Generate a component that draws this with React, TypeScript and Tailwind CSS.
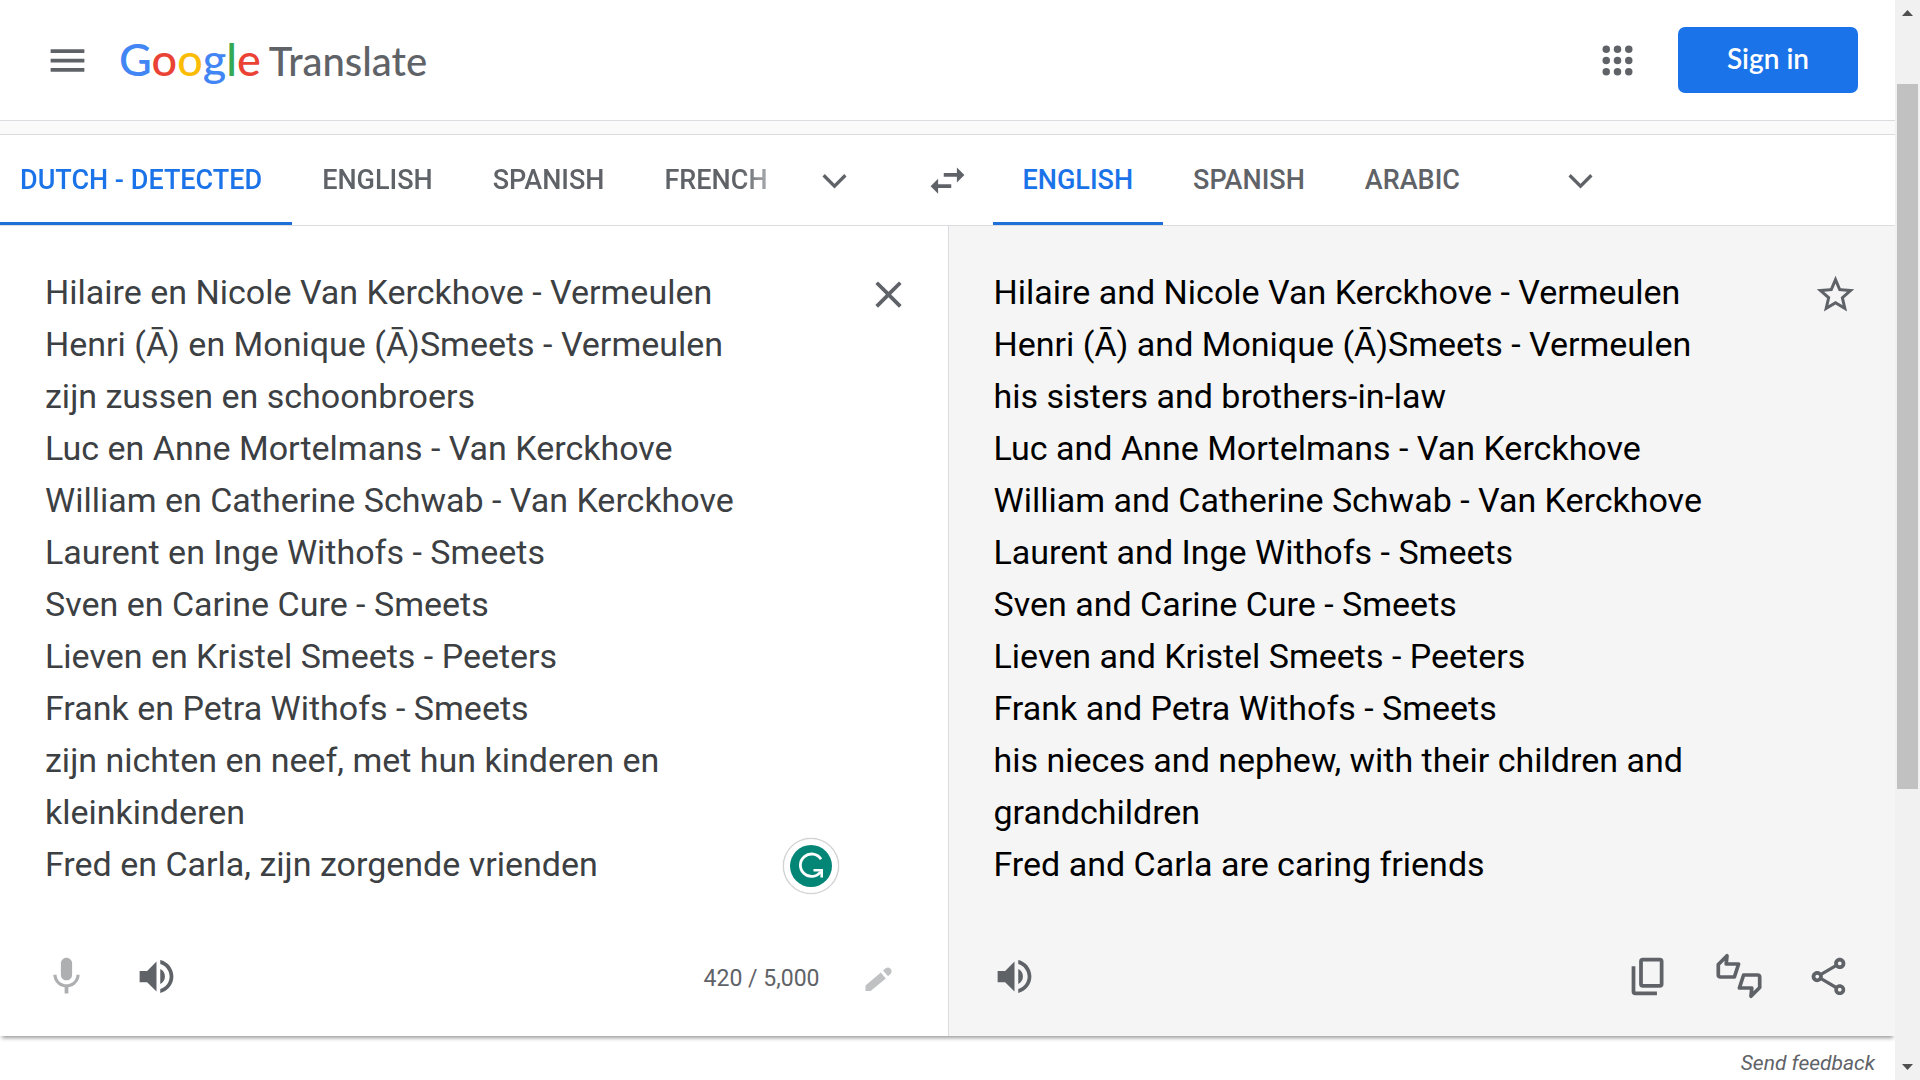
import type { ReactElement, ReactNode } from "react";
import { useState } from "react";
import {
  MdClose,
  MdMenu,
  MdMic,
  MdOutlineShare,
  MdStarBorder,
  MdSwapHoriz,
  MdVolumeUp,
} from "react-icons/md";

const SOURCE_LANGUAGES = ["DUTCH - DETECTED", "ENGLISH", "SPANISH", "FRENCH"];
const TARGET_LANGUAGES = ["ENGLISH", "SPANISH", "ARABIC"];

const SOURCE_TEXT = [
  "Hilaire en Nicole Van Kerckhove - Vermeulen",
  "Henri (Ā) en Monique (Ā)Smeets - Vermeulen",
  "zijn zussen en schoonbroers",
  "Luc en Anne Mortelmans - Van Kerckhove",
  "William en Catherine Schwab - Van Kerckhove",
  "Laurent en Inge Withofs - Smeets",
  "Sven en Carine Cure - Smeets",
  "Lieven en Kristel Smeets - Peeters",
  "Frank en Petra Withofs - Smeets",
  "zijn nichten en neef, met hun kinderen en kleinkinderen",
  "Fred en Carla, zijn zorgende vrienden",
].join("\n");

const TARGET_TEXT = [
  "Hilaire and Nicole Van Kerckhove - Vermeulen",
  "Henri (Ā) and Monique (Ā)Smeets - Vermeulen",
  "his sisters and brothers-in-law",
  "Luc and Anne Mortelmans - Van Kerckhove",
  "William and Catherine Schwab - Van Kerckhove",
  "Laurent and Inge Withofs - Smeets",
  "Sven and Carine Cure - Smeets",
  "Lieven and Kristel Smeets - Peeters",
  "Frank and Petra Withofs - Smeets",
  "his nieces and nephew, with their children and grandchildren",
  "Fred and Carla are caring friends",
].join("\n");

const LOGO_LETTERS = [
  { char: "G", color: "text-[#4285f4]" },
  { char: "o", color: "text-[#ea4335]" },
  { char: "o", color: "text-[#fbbc05]" },
  { char: "g", color: "text-[#4285f4]" },
  { char: "l", color: "text-[#34a853]" },
  { char: "e", color: "text-[#ea4335]" },
];

function IconButton({
  label,
  children,
}: {
  label: string;
  children: ReactNode;
}): ReactElement {
  return (
    <button
      aria-label={label}
      className="flex size-[45px] shrink-0 items-center justify-center"
      type="button"
    >
      {children}
    </button>
  );
}

function AppsIcon(): ReactElement {
  return (
    <svg
      aria-hidden="true"
      className="size-[45px]"
      fill="currentColor"
      viewBox="0 0 24 24"
    >
      {[6, 12, 18].map((y) =>
        [6, 12, 18].map((x) => <circle cx={x} cy={y} key={`${x}-${y}`} r="2" />)
      )}
    </svg>
  );
}

function ChevronIcon(): ReactElement {
  return (
    <svg
      aria-hidden="true"
      className="size-[45px]"
      fill="none"
      stroke="currentColor"
      strokeWidth="1.7"
      viewBox="0 0 24 24"
    >
      <path d="M6.2 9.2 12 15l5.8-5.8" />
    </svg>
  );
}

function PencilIcon(): ReactElement {
  return (
    <svg
      aria-hidden="true"
      className="size-[45px]"
      fill="currentColor"
      viewBox="0 0 45 45"
    >
      <path d="M9.5 37v-5.6L24.8 18.4l5 6L14.6 37z" />
      <path d="M27 16.6l2.7-2.3q2.6-1.6 4.8.5 2.2 2.6.2 5L32 22.3z" />
    </svg>
  );
}

function CopyIcon(): ReactElement {
  return (
    <svg
      aria-hidden="true"
      className="size-[45px]"
      fill="none"
      stroke="currentColor"
      strokeWidth="2"
      viewBox="0 0 24 24"
    >
      <rect height="14" rx="1" width="11" x="8" y="3" />
      <path d="M4 6.5V20q0 1 1 1h11.5" />
    </svg>
  );
}

function RateIcon(): ReactElement {
  return (
    <svg
      aria-hidden="true"
      className="size-12 shrink-0"
      fill="none"
      stroke="currentColor"
      strokeLinejoin="round"
      strokeWidth="3.7"
      viewBox="0 0 48 48"
    >
      <path d="M3.3 12.5 12 3.8l-.8 8.2h12.4l-4.2 13H5.5q-2.2 0-2.2-2z" />
      <path d="M44.700 35.500 36 44.200l.8-8.200H24.400l4.200-13h13.900q2.200 0 2.200 2z" />
    </svg>
  );
}

function GrammarlyBadge(): ReactElement {
  return (
    <button
      aria-label="Open Grammarly"
      className="absolute right-[109px] bottom-[22px] flex size-14 items-center justify-center rounded-full border border-[#d0d3d3] bg-white shadow-[0_0_1px_rgba(0,0,0,0.3)]"
      type="button"
    >
      <svg aria-hidden="true" className="size-[42px]" fill="none" viewBox="0 0 42 42">
        <circle cx="21" cy="21" fill="#048676" r="21" />
        <path
          d="M31 14.2A11.200 11.200 0 1 0 30.500 27"
          stroke="#fff"
          strokeWidth="2.8"
        />
        <path d="M23.500 25.200h8.200v7.300" stroke="#fff" strokeWidth="2.6" />
      </svg>
    </button>
  );
}

function LanguageTabs({
  label,
  languages,
  className,
  firstClassName,
}: {
  label: string;
  languages: string[];
  className: string;
  firstClassName: string;
}): ReactElement {
  const [selected, setSelected] = useState(0);

  return (
    <div aria-label={label} className={`flex self-stretch ${className}`} role="tablist">
      {languages.map((language, index) => (
        <button
          aria-selected={index === selected}
          className={`shrink-0 border-b-[3px] pt-1 text-[27px] font-medium whitespace-nowrap ${
            index === 0 ? firstClassName : "px-[30px]"
          } ${
            index === selected
              ? "border-[#1f6fd8] text-[#1a73e8]"
              : "border-transparent text-[#5f6368]"
          }`}
          key={language}
          onClick={() => setSelected(index)}
          role="tab"
          type="button"
        >
          {language}
        </button>
      ))}
    </div>
  );
}

function Header(): ReactElement {
  return (
    <header className="flex h-[121px] items-center border-b border-[#dadce0] pr-[37px] pl-[45px] text-[#5f6368]">
      <IconButton label="Main menu">
        <MdMenu className="size-[45px]" />
      </IconButton>
      <a
        className="ml-[29px] flex items-baseline gap-2 pb-0.5 font-[Lato,sans-serif] leading-none font-medium"
        href="#home"
      >
        <span className="text-[45px]">
          {LOGO_LETTERS.map(({ char, color }, index) => (
            <span className={color} key={`${char}-${index}`}>
              {char}
            </span>
          ))}
        </span>
        <span className="text-[40px]">Translate</span>
      </a>
      <div className="ml-auto flex items-center gap-[38px]">
        <IconButton label="Google apps">
          <AppsIcon />
        </IconButton>
        <a
          className="flex h-[66px] w-[180px] items-center justify-center rounded-[7px] bg-[#1a73e8] pb-1 font-[Lato,sans-serif] text-[28px] font-semibold text-white"
          href="#signin"
        >
          Sign in
        </a>
      </div>
    </header>
  );
}

function LanguageBar(): ReactElement {
  return (
    <div className="grid h-[91px] grid-cols-[minmax(0,1fr)_90px_minmax(0,1fr)] items-center border-b border-[#dadce0] text-[#5f6368]">
      <div className="flex items-center self-stretch pr-8">
        <LanguageTabs
          className="min-w-0 flex-1 overflow-hidden [mask-image:linear-gradient(to_right,#000_calc(100%-58px),transparent)]"
          firstClassName="pl-5 pr-[30px]"
          label="Source language"
          languages={SOURCE_LANGUAGES}
        />
        <button
          aria-label="More source languages"
          className="flex w-[72px] justify-center"
          type="button"
        >
          <ChevronIcon />
        </button>
      </div>
      <div className="flex justify-center">
        <IconButton label="Swap languages">
          <MdSwapHoriz className="size-[45px]" />
        </IconButton>
      </div>
      <div className="flex items-center self-stretch">
        <LanguageTabs
          className=""
          firstClassName="px-[30px]"
          label="Target language"
          languages={TARGET_LANGUAGES}
        />
        <button
          aria-label="More target languages"
          className="ml-[55px] flex w-[72px] justify-center"
          type="button"
        >
          <ChevronIcon />
        </button>
      </div>
    </div>
  );
}

function SourcePanel(): ReactElement {
  const [text, setText] = useState(SOURCE_TEXT);

  return (
    <section className="flex flex-col">
      <div className="relative flex flex-1 items-start pt-10 pr-[37px] pl-[45px]">
        <textarea
          aria-label="Source text"
          className="min-w-0 flex-1 resize-none overflow-hidden text-[34px] leading-[52px] text-[#3c4043] outline-none"
          onChange={(event) => setText(event.target.value)}
          rows={12}
          spellCheck={false}
          value={text}
        />
        <div className="ml-6 pt-1.5">
          <IconButton label="Clear source text">
            <MdClose className="size-[45px] text-[#5f6368]" />
          </IconButton>
        </div>
        <GrammarlyBadge />
      </div>
      <div className="flex h-[120px] items-center pr-[47px] pl-11 text-[#5f6368]">
        <span className="text-[#adafb1]">
          <IconButton label="Translate by voice">
            <MdMic className="size-[45px]" />
          </IconButton>
        </span>
        <span className="ml-[45px]">
          <IconButton label="Listen to source text">
            <MdVolumeUp className="size-[45px]" />
          </IconButton>
        </span>
        <span className="ml-auto pt-1.5 text-[23px]">420 / 5,000</span>
        <span className="ml-9 text-[#c0c1c2]">
          <IconButton label="Handwriting input">
            <PencilIcon />
          </IconButton>
        </span>
      </div>
    </section>
  );
}

function TargetPanel(): ReactElement {
  return (
    <section className="flex flex-col border-l border-[#dadce0] bg-[#f5f5f5] text-[#5f6368]">
      <div className="flex flex-1 items-start pt-10 pr-[37px] pl-[45px]">
        <p className="min-w-0 flex-1 text-[34px] leading-[52px] whitespace-pre-line text-black">
          {TARGET_TEXT}
        </p>
        <div className="ml-[60px] pt-1.5">
          <IconButton label="Save translation">
            <MdStarBorder className="size-[45px]" />
          </IconButton>
        </div>
      </div>
      <div className="flex h-[120px] items-center pr-11 pl-[43px]">
        <IconButton label="Listen to translation">
          <MdVolumeUp className="size-[45px]" />
        </IconButton>
        <div className="ml-auto flex items-center gap-[45px]">
          <IconButton label="Copy translation">
            <CopyIcon />
          </IconButton>
          <IconButton label="Rate this translation">
            <RateIcon />
          </IconButton>
          <IconButton label="Share translation">
            <MdOutlineShare className="size-[45px]" />
          </IconButton>
        </div>
      </div>
    </section>
  );
}

function PageScrollbar(): ReactElement {
  return (
    <div
      aria-hidden="true"
      className="flex w-[25px] shrink-0 flex-col items-center bg-[#f1f1f1]"
    >
      <svg className="size-[25px] shrink-0" fill="#505050" viewBox="0 0 25 25">
        <path d="M7 16h11l-5.5-6z" />
      </svg>
      <div className="grow-[59]" />
      <div className="w-[21px] grow-[705] bg-[#c1c1c1]" />
      <div className="grow-[266]" />
      <svg className="size-[25px] shrink-0" fill="#505050" viewBox="0 0 25 25">
        <path d="M7 9h11l-5.5 6z" />
      </svg>
    </div>
  );
}

export default function App(): ReactElement {
  return (
    <div className="flex min-h-screen bg-white font-[Roboto,sans-serif]">
      <div className="flex min-w-0 flex-1 flex-col">
        <Header />
        <div className="h-3.5 border-b border-[#dadce0] bg-[#fafafa]" />
        <main className="flex flex-1 flex-col shadow-[0_4px_4px_-2px_rgba(0,0,0,0.4)]">
          <LanguageBar />
          <div className="grid flex-1 grid-cols-2">
            <SourcePanel />
            <TargetPanel />
          </div>
        </main>
        <footer className="flex h-11 items-center justify-end pt-3 pr-5">
          <a className="text-[21px] text-[#5f6368] italic" href="#feedback">
            Send feedback
          </a>
        </footer>
      </div>
      <PageScrollbar />
    </div>
  );
}
